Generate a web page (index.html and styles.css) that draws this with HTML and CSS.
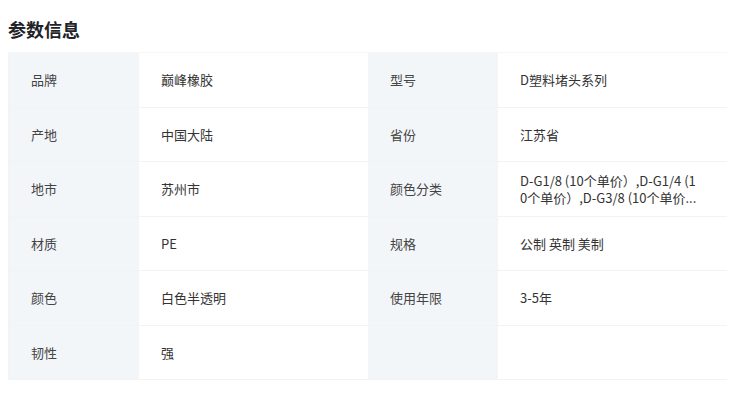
FILE: index.html
```html
<!DOCTYPE html>
<html lang="zh-CN">
<head>
<meta charset="utf-8">
<link rel="stylesheet" href="styles.css">
</head>
<body>
<div class="page">
  <h2 class="title">参数信息</h2>
  <div class="table">
    <div class="row">
      <div class="label">品牌</div><div class="value">巅峰橡胶</div>
      <div class="label">型号</div><div class="value">D塑料堵头系列</div>
    </div>
    <div class="row">
      <div class="label">产地</div><div class="value">中国大陆</div>
      <div class="label">省份</div><div class="value">江苏省</div>
    </div>
    <div class="row">
      <div class="label">地市</div><div class="value">苏州市</div>
      <div class="label">颜色分类</div><div class="value"><span class="wrap">D-G1/8 (10个单价）,D-G1/4 (10个单价）,D-G3/8 (10个单价...</span></div>
    </div>
    <div class="row">
      <div class="label">材质</div><div class="value">PE</div>
      <div class="label">规格</div><div class="value">公制 英制 美制</div>
    </div>
    <div class="row">
      <div class="label">颜色</div><div class="value">白色半透明</div>
      <div class="label">使用年限</div><div class="value">3-5年</div>
    </div>
    <div class="row last">
      <div class="label">韧性</div><div class="value">强</div>
      <div class="label"></div><div class="value"></div>
    </div>
  </div>
</div>
</body>
</html>
```
FILE: styles.css
```css
* { box-sizing: border-box; }
html, body { margin: 0; padding: 0; background: #fff; }
body {
  font-family: "Microsoft YaHei", "Noto Sans CJK SC", "Noto Sans", sans-serif;
  color: #333;
}
.page { padding: 16px 23px 0 8px; }
.title {
  margin: 0;
  font-size: 18px;
  line-height: 26px;
  font-weight: 700;
  color: #1f2329;
  height: 36px;
}
.table {
  border: 1px solid #f2f3f5;
  border-top: none;
  width: 719px;
}
.row {
  display: grid;
  grid-template-columns: 130px 229px 130px 229px;
  height: 54.5px;
  border-top: 1px solid #f2f3f5;
}
.row:first-child { border-top: 1px solid #f5f6f8; }
.label, .value {
  display: flex;
  align-items: center;
  padding: 0 22px;
  font-size: 13px;
  line-height: 17px;
}
.label { background: #f3f6f9; color: #444; }
.value { background: #fff; color: #333; }
.wrap {
  display: block;
  max-width: 180px;
  word-break: break-all;
}
```
